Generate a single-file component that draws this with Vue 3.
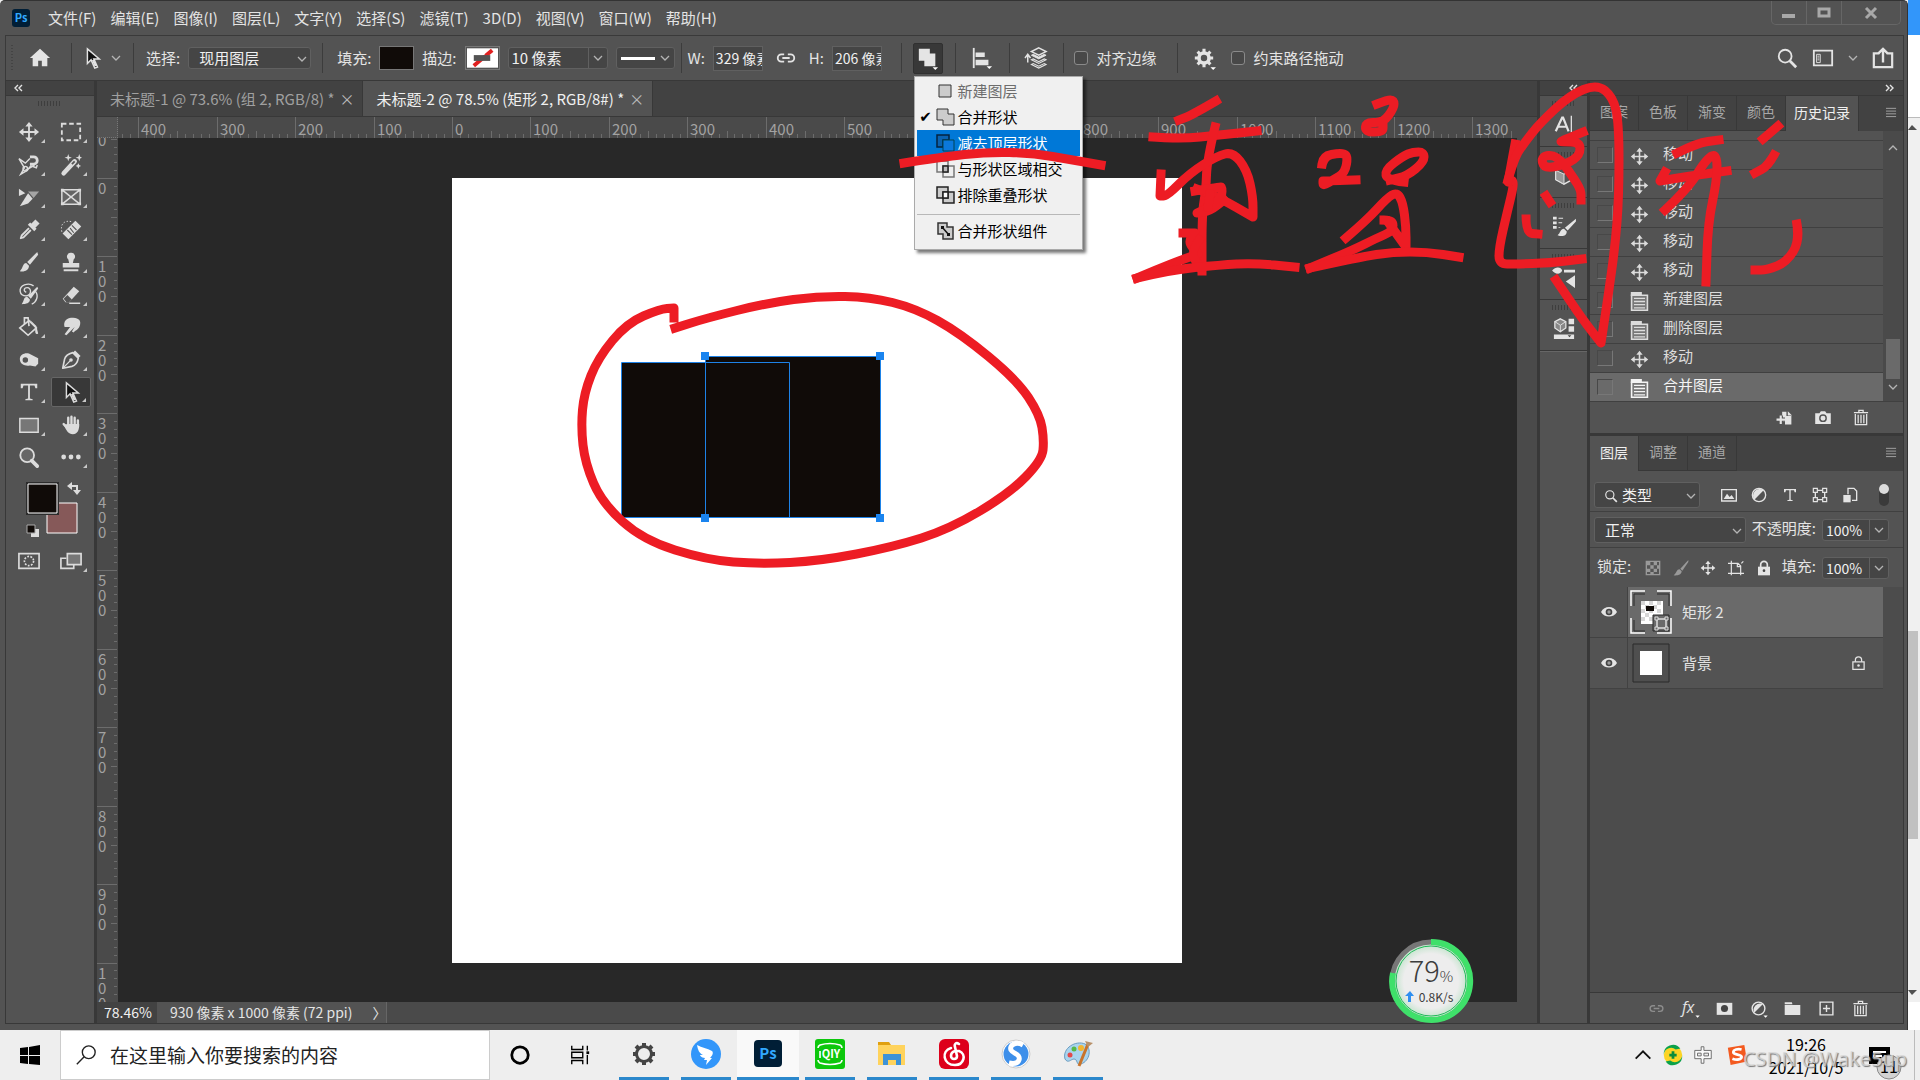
<template>
  <div class="screen">
    <div class="desktop">
      <main class="ps">
        <header class="menubar">
          <span class="ps-logo">Ps</span>
          <nav class="menus">
            <button v-for="m in menus" :key="m" class="menu-button">{{ m }}</button>
          </nav>
          <div class="window-buttons">
            <button aria-label="最小化"><svg viewBox="0 0 14 14"><path d="M0 8h13v4H0z" fill="#a8a8a8" /></svg></button>
            <button aria-label="最大化"><svg viewBox="0 0 14 14"><path d="M2 3h10v7H2z" fill="none" stroke="#a8a8a8" stroke-width="3" /></svg></button>
            <button aria-label="关闭" class="close"><svg viewBox="0 0 14 14"><path d="M2 2l10 10M12 2L2 12" fill="none" stroke="#a8a8a8" stroke-width="3" /></svg></button>
          </div>
        </header>

        <section class="options">
          <div class="group g-home">
            <i class="grip-v"></i>
            <button class="icon-button" aria-label="主页"><svg viewBox="0 0 24 24" v-html="icons.home"></svg></button>
          </div>
          <div class="group g-tool">
            <svg class="icon" viewBox="0 0 24 24" v-html="icons.select"></svg>
            <svg class="chev" viewBox="0 0 10 10" v-html="icons.chevron"></svg>
          </div>
          <div class="group">
            <label for="pick">选择:</label>
            <div class="drop w-pick">
              <select id="pick"><option>现用图层</option></select>
              <svg class="chev" viewBox="0 0 10 10" v-html="icons.chevron"></svg>
            </div>
          </div>
          <div class="group g-paint">
            <span>填充:</span>
            <button class="paint fill" aria-label="填充颜色"></button>
            <span>描边:</span>
            <button class="paint" aria-label="描边颜色">
              <svg viewBox="0 0 32 20"><path d="M0 0h32v20H0z" fill="#fff" /><path d="M7 18L26 2" stroke="#e02020" stroke-width="4" /><path d="M5 4h13v3H5zM16 14h12v3H16z" fill="#fff" /><path d="M7 7h17v6H7z" fill="#535353" /></svg>
            </button>
            <div class="combo w-stroke">
              <input aria-label="描边宽度" value="10 像素" />
              <button aria-label="描边宽度选项"><svg class="chev" viewBox="0 0 10 10" v-html="icons.chevron"></svg></button>
            </div>
            <button class="line-type" aria-label="描边类型"><i></i><svg class="chev" viewBox="0 0 10 10" v-html="icons.chevron"></svg></button>
          </div>
          <div class="group g-size">
            <label for="w">W:</label>
            <input id="w" class="size" value="329 像素" />
            <button class="icon-button link" aria-label="链接"><svg viewBox="0 0 24 24" v-html="icons.link"></svg></button>
            <label for="h">H:</label>
            <input id="h" class="size" value="206 像素" />
          </div>
          <div class="group g-path">
            <button class="path-button" aria-label="路径操作"><svg viewBox="0 0 24 24" v-html="icons.union"></svg></button>
            <ul class="path-menu">
              <li v-for="p in pathOps" :key="p.text" :class="p.state">
                <span class="check">{{ p.state === "checked" ? "✔" : "" }}</span>
                <svg viewBox="0 0 20 20" v-html="p.icon"></svg>
                <button>{{ p.text }}</button>
              </li>
            </ul>
          </div>
          <div class="group g-path"><button class="icon-button" aria-label="对齐"><svg viewBox="0 0 24 24" v-html="icons.align"></svg></button></div>
          <div class="group g-path"><button class="icon-button" aria-label="排列"><svg viewBox="0 0 24 24" v-html="icons.arrange"></svg></button></div>
          <div class="group g-edge">
            <label><input type="checkbox" />对齐边缘</label>
          </div>
          <div class="group g-gear">
            <button class="icon-button" aria-label="设置"><svg viewBox="0 0 24 24" v-html="icons.gear"></svg></button>
            <label><input type="checkbox" />约束路径拖动</label>
          </div>
          <div class="options-right">
            <button class="icon-button" aria-label="搜索"><svg viewBox="0 0 24 24" v-html="icons.search"></svg></button>
            <button class="icon-button" aria-label="工作区"><svg viewBox="0 0 24 24" v-html="icons.workspace"></svg></button>
            <svg class="chev" viewBox="0 0 10 10" v-html="icons.chevron"></svg>
            <button class="icon-button" aria-label="共享"><svg viewBox="0 0 24 24" v-html="icons.share"></svg></button>
          </div>
        </section>

        <div class="work">
          <aside class="toolbar">
            <div class="collapse"><svg viewBox="0 0 10 8" v-html="icons.dblLeft"></svg></div>
            <div class="tool-grip"><i class="grip"></i></div>
            <div class="tools">
              <button v-for="t in tools" :key="t" :class="['tool', { active: t === 'select' }, { plain: t === 'zoom' }]" :aria-label="t">
                <svg viewBox="0 0 24 24" v-html="icons[t]"></svg>
              </button>
            </div>
            <svg class="swatches" viewBox="0 0 60 56">
              <path d="M21 21h30v30H21z" fill="#865959" stroke="#fff" stroke-width="1" />
              <path d="M1 1h31v31H1z" fill="#100b08" stroke="#2c2c2c" stroke-width="2" />
              <path d="M2 2h29v29H2z" fill="#100b08" stroke="#fff" stroke-width="1" />
              <path d="M44 4h7v6" fill="none" stroke="#dcdcdc" stroke-width="2" />
              <path d="M46 0v8l-5-4zM47 8h8l-4 5z" fill="#dcdcdc" />
              <path d="M5 47h8v8H5z" fill="#dcdcdc" /><path d="M1 43h8v8H1z" fill="#100b08" stroke="#aaa" />
            </svg>
            <div class="modes">
              <button class="tool plain" aria-label="快速蒙版"><svg viewBox="0 0 24 24" v-html="icons.quickmask"></svg></button>
              <button class="tool" aria-label="屏幕模式"><svg viewBox="0 0 24 24" v-html="icons.screenmode"></svg></button>
            </div>
          </aside>

          <section class="doc">
            <div class="doc-tabs">
              <div class="doc-tab">未标题-1 @ 73.6% (组 2, RGB/8) *<button aria-label="关闭标签">×</button></div>
              <div class="doc-tab active">未标题-2 @ 78.5% (矩形 2, RGB/8#) *<button aria-label="关闭标签">×</button></div>
            </div>
            <div class="doc-body">
              <div class="corner"></div>
              <svg class="ruler-h">
                <path v-for="t in hTicks" :key="t.at" :d="`M${t.at} ${t.start}V21`" class="tick" />
                <text v-for="l in hLabels" :key="l.at" :x="l.at + 3" y="18">{{ l.text }}</text>
              </svg>
              <div class="filler"></div>
              <svg class="ruler-v">
                <path v-for="t in vTicks" :key="t.at" :d="`M${t.start} ${t.at}H20`" class="tick" />
                <text v-for="d in vDigits" :key="d.y" x="1" :y="d.y">{{ d.text }}</text>
              </svg>
              <div class="stage">
                <div class="paper">
                  <svg viewBox="0 0 730 785">
                    <path d="M170 185h84v-6h174v161H170z" fill="#100b08" />
                    <g fill="none" stroke="#1e82e6">
                      <path d="M169.5 184.500h168v155h-168z" />
                      <path d="M253.500 178.500h175v161h-175z" />
                    </g>
                    <path v-for="h in handles" :key="h" :d="`M${h}h8v8h-8z`" fill="#1a84ef" />
                  </svg>
                </div>
              </div>
              <div class="filler"></div>
            </div>
            <footer class="status">
              <span class="zoom">78.46%</span>
              <span class="info">930 像素 x 1000 像素 (72 ppi)<b>〉</b></span>
            </footer>
          </section>

          <aside class="dock">
            <div class="collapse end"><svg viewBox="0 0 10 8" v-html="icons.dblLeft"></svg></div>
            <div v-for="d in dock" :key="d" class="dock-cell">
              <i class="grip"></i>
              <button :aria-label="d"><svg viewBox="0 0 24 24" v-html="icons[d]"></svg></button>
            </div>
            <div class="dock-rest"></div>
          </aside>

          <aside class="panels">
            <div class="collapse end"><svg viewBox="0 0 10 8" v-html="icons.dblRight"></svg></div>
            <div class="tabs">
              <button v-for="t in historyTabs" :key="t" :class="{ active: t === '历史记录' }">{{ t }}</button>
              <svg class="burger" viewBox="0 0 12 10" v-html="icons.burger"></svg>
            </div>
            <div class="history">
              <ol>
                <li v-for="(h, i) in history" :key="i" :class="{ current: h === '合并图层' }">
                  <i class="snap"></i>
                  <svg viewBox="0 0 24 24" v-html="h === '移动' ? icons.move : icons.doc"></svg>
                  <span>{{ h }}</span>
                </li>
              </ol>
              <div class="scroll">
                <svg class="chev up" viewBox="0 0 10 10" v-html="icons.chevron"></svg>
                <i></i>
                <svg class="chev" viewBox="0 0 10 10" v-html="icons.chevron"></svg>
              </div>
            </div>
            <div class="history-foot">
              <button aria-label="从当前状态创建新文档"><svg viewBox="0 0 24 24" v-html="icons.newdoc"></svg></button>
              <button aria-label="创建新快照"><svg viewBox="0 0 24 24" v-html="icons.camera"></svg></button>
              <button aria-label="删除当前状态"><svg viewBox="0 0 24 24" v-html="icons.trash"></svg></button>
            </div>

            <div class="tabs second">
              <button class="active">图层</button>
              <button>调整</button>
              <button>通道</button>
              <svg class="burger" viewBox="0 0 12 10" v-html="icons.burger"></svg>
            </div>
            <div class="row filter">
              <div class="drop w-kind">
                <svg class="lens" viewBox="0 0 24 24" v-html="icons.search"></svg>
                <select aria-label="图层类型"><option>类型</option></select>
                <svg class="chev" viewBox="0 0 10 10" v-html="icons.chevron"></svg>
              </div>
              <div class="kinds">
                <button v-for="k in kinds" :key="k" :aria-label="k"><svg viewBox="0 0 24 24" v-html="icons[k]"></svg></button>
              </div>
              <button class="switch" aria-label="图层过滤开关"></button>
            </div>
            <div class="row">
              <div class="drop w-blend">
                <select aria-label="混合模式"><option>正常</option></select>
                <svg class="chev" viewBox="0 0 10 10" v-html="icons.chevron"></svg>
              </div>
              <label for="opacity">不透明度:</label>
              <div class="combo w-pct">
                <input id="opacity" value="100%" />
                <button aria-label="不透明度选项"><svg class="chev" viewBox="0 0 10 10" v-html="icons.chevron"></svg></button>
              </div>
            </div>
            <div class="row lock-row">
              <span>锁定:</span>
              <div class="locks">
                <button v-for="k in locks" :key="k" :aria-label="k"><svg viewBox="0 0 24 24" v-html="icons[k]"></svg></button>
              </div>
              <label for="fill">填充:</label>
              <div class="combo w-pct">
                <input id="fill" value="100%" />
                <button aria-label="填充选项"><svg class="chev" viewBox="0 0 10 10" v-html="icons.chevron"></svg></button>
              </div>
            </div>
            <div class="layers">
              <div class="layer selected">
                <button class="eye" aria-label="可见性"><svg viewBox="0 0 24 24" v-html="icons.eye"></svg></button>
                <div class="layer-main">
                  <svg class="thumb" viewBox="0 0 42 44" v-html="icons.shapeThumb"></svg>
                  <span>矩形 2</span>
                </div>
              </div>
              <div class="layer">
                <button class="eye" aria-label="可见性"><svg viewBox="0 0 24 24" v-html="icons.eye"></svg></button>
                <div class="layer-main">
                  <svg class="thumb" viewBox="0 0 42 44"><path d="M3 3h36v38H3z" fill="#4f4f4f" stroke="#2b2b2b" /><path d="M10 10h22v24H10z" fill="#fff" /></svg>
                  <span>背景</span>
                  <svg class="padlock" viewBox="0 0 24 24" v-html="icons.lockOutline"></svg>
                </div>
              </div>
            </div>
            <div class="layers-foot">
              <button v-for="f in footIcons" :key="f" :aria-label="f" :class="{ dim: f === 'link' }"><svg viewBox="0 0 24 24" v-html="icons[f]"></svg></button>
            </div>
          </aside>
        </div>
      </main>

      <div class="behind">
        <div class="blue"></div>
        <div class="white"></div>
        <div class="track">
          <svg viewBox="0 0 12 8"><path d="M0 6h9L4 1z" fill="#505050" /></svg>
          <i></i>
          <svg viewBox="0 0 12 8"><path d="M0 2h9L4 7z" fill="#505050" /></svg>
        </div>
        <div class="white-end"></div>
      </div>
    </div>

    <footer class="taskbar">
      <button class="start" aria-label="开始"><svg viewBox="0 0 20 20"><path d="M0 3l8-1v8H0zM9 2l11-2v10H9zM0 11h8v8l-8-1zM9 11h11v9L9 19z" /></svg></button>
      <div class="search">
        <svg viewBox="0 0 24 24"><circle cx="15" cy="9" r="7" /><path d="M10 14L2 22" /></svg>
        <input aria-label="搜索" placeholder="在这里输入你要搜索的内容" />
      </div>
      <button class="sys" aria-label="Cortana"><svg viewBox="0 0 24 24"><circle cx="12" cy="12" r="9" stroke-width="3" /></svg></button>
      <button class="sys" aria-label="任务视图"><svg viewBox="0 0 24 24"><path d="M3 2v4h12V2M3 22v-4h12v4M3 9h12v6H3zM20 2v5M20 12v10" /><path d="M19 8h3v3h-3z" fill="#000" stroke="none" /></svg></button>
      <button v-for="a in apps" :key="a.name" :class="['app', { active: a.name === 'Photoshop' }]" :aria-label="a.name">
        <svg viewBox="0 0 32 32" v-html="a.icon"></svg>
      </button>
      <div class="tray">
        <button aria-label="显示隐藏的图标"><svg viewBox="0 0 24 24"><path d="M4 16l8-8 8 8" fill="none" stroke="#111" stroke-width="2" /></svg></button>
        <button aria-label="安全卫士"><svg viewBox="0 0 24 24"><circle cx="12" cy="12" r="10" fill="#fcd424" /><path d="M2 12A10 10 0 0 1 20 5l-5 1A8 8 0 0 0 2 12zM22 12A10 10 0 0 1 4 19l5-1A8 8 0 0 0 22 12z" fill="#0ba14a" /><path d="M12 8v8M8 12h8" stroke="#0b8c3c" stroke-width="3" /></svg></button>
        <button aria-label="输入法" class="ime"><svg viewBox="0 0 24 24"><path d="M10 3h3v4h8v9h-8v5h-3v-5H3V7h7zM6 10v3h4v-3zM13 10v3h5v-3z" fill="#fafafa" stroke="#666" /></svg></button>
        <button aria-label="搜狗" class="sogou"><svg viewBox="0 0 24 24"><path d="M2 4l18-3 3 18-18 4z" fill="#f35a1f" /><path d="M17 6c-4-1-9 0-9 3s9 2 9 5-5 4-10 2" fill="none" stroke="#fff" stroke-width="3" /></svg></button>
        <div class="clock"><time>19:26</time><time>2021/10/5</time></div>
        <button aria-label="通知" class="notice"><svg viewBox="0 0 36 36"><path d="M2 5h21v17h-5v4l-4-4H2z" /><path d="M6 10h13M6 14h9" stroke="#fff" stroke-width="2" /><circle cx="22" cy="25" r="12" fill="#d2d2d2" stroke="#888" /><text x="22" y="31" text-anchor="middle">11</text></svg></button>
      </div>
    </footer>

    <div class="speed">
      <svg viewBox="0 0 84 84">
        <defs><radialGradient id="ball"><stop offset="0.7" stop-color="#ededed" /><stop offset="1" stop-color="#b9e2c4" /></radialGradient></defs>
        <circle cx="42" cy="42" r="39" fill="url(#ball)" stroke="#777" stroke-width="5" />
        <path d="M42 3a39 39 0 1 1-38 31" fill="none" stroke="#3fe06a" stroke-width="6" />
        <circle cx="42" cy="42" r="35" fill="none" stroke="#1fb958" stroke-width="1" />
        <path d="M21 52l4 5h-3v6h-3v-6h-3z" fill="#2f8ff0" />
      </svg>
      <p>79<small>%</small></p>
      <p class="rate">0.8K/s</p>
    </div>

    <svg class="ink"><path v-for="(s, i) in strokes" :key="i" :d="smooth(s)" /></svg>
    <div class="mark">CSDN @Wake5up</div>
  </div>
</template>

<script setup>
const menus = ["文件(F)", "编辑(E)", "图像(I)", "图层(L)", "文字(Y)", "选择(S)", "滤镜(T)", "3D(D)", "视图(V)", "窗口(W)", "帮助(H)"];

const icons = {
  home: '<path d="M12 2L1 12h3v9h6v-6h4v6h6v-9h3z" fill="currentColor"/>',
  chevron: '<path d="M1 3l4 4 4-4" fill="none" stroke="currentColor" stroke-width="1.3"/>',
  dblLeft: '<path d="M4 1L1 4l3 3M8 1L5 4l3 3" fill="none" stroke="currentColor" stroke-width="1.4"/>',
  dblRight: '<path d="M1 1l3 3-3 3M5 1l3 3-3 3" fill="none" stroke="currentColor" stroke-width="1.4"/>',
  burger: '<path d="M0 1h11M0 4h11M0 7h11M0 10h11" stroke="currentColor"/>',
  link: '<path d="M10 8H7a4 4 0 0 0 0 8h3M14 8h3a4 4 0 0 1 0 8h-3M8 12h8" fill="none" stroke="currentColor" stroke-width="2"/>',
  union: '<path d="M2 2h12v5h6v14H8v-6H2z" fill="currentColor"/><path d="M17 22h6l-3 3z" fill="#fff"/>',
  align: '<path d="M3 1v22" stroke="currentColor" stroke-width="2"/><path d="M5 6h10v5H5zM5 14h14v6H5z" fill="currentColor"/><path d="M17 21h6l-3 3z" fill="#fff"/>',
  arrange: '<path d="M15 1l8 4-8 4-8-4z" fill="none" stroke="currentColor" stroke-width="1.6"/><path d="M7 9l8 4 8-4-2-1-6 3-6-3z" fill="currentColor" stroke="currentColor"/><path d="M7 14l2-1 6 3 6-3 2 1-8 4zM7 19l2-1 6 3 6-3 2 1-8 4z" fill="none" stroke="currentColor" stroke-width="1.2"/><path d="M3 8v9M0 12l3-4 3 4" fill="none" stroke="currentColor" stroke-width="1.6"/>',
  gear: '<circle cx="12" cy="12" r="5.500" fill="none" stroke="currentColor" stroke-width="4"/><path d="M12 2v4M12 18v4M2 12h4M18 12h4M5 5l3 3M16 16l3 3M19 5l-3 3M5 19l3-3" stroke="currentColor" stroke-width="3.4"/><path d="M19 22h6l-3 3z" fill="#fff"/>',
  search: '<circle cx="10" cy="10" r="7" fill="none" stroke="currentColor" stroke-width="2"/><path d="M15 15l7 7" stroke="currentColor" stroke-width="3"/>',
  workspace: '<path d="M2 4h20v16H2z" fill="none" stroke="currentColor" stroke-width="2"/><path d="M5 8h4v9H5z" fill="none" stroke="currentColor"/><path d="M6 10h2M6 12h2M6 14h2" stroke="currentColor"/>',
  share: '<path d="M8 7H2v15h20V7h-6" fill="none" stroke="currentColor" stroke-width="2.4"/><path d="M12 17V3M7 7l5-5 5 5" fill="none" stroke="currentColor" stroke-width="2.6"/>',
  move: '<path d="M12 4v16M4 12h16" stroke="currentColor" stroke-width="2"/><path d="M12 1l4 5H8zM12 23l4-5H8zM1 12l5-4v8zM23 12l-5-4v8z" fill="currentColor"/>',
  marquee: '<path d="M2 3h20v18H2z" fill="none" stroke="currentColor" stroke-width="2" stroke-dasharray="5 3"/>',
  lasso: '<path d="M1 5l7 5 5-5M1 5l6 10-4 7 7-4 4-5 6 2 1-3M8 18l10-6" fill="none" stroke="currentColor" stroke-width="1.6"/><path d="M13 3h4a4 4 0 0 1 0 8h-4" fill="none" stroke="currentColor" stroke-width="3"/><circle cx="8" cy="16" r="2.5" fill="none" stroke="currentColor" stroke-width="1.6"/>',
  wand: '<path d="M4 21L16 8" stroke="currentColor" stroke-width="5" stroke-linecap="round"/><path d="M13 11l3-3" stroke="#555" stroke-width="2"/><path d="M9 0l1 3 3 1-3 1-1 3-1-3-3-1 3-1zM21 0l1 3 2 1-2 1-1 3-1-3-3-1 3-1zM20 10l1 2 2 1-2 1-1 2-1-2-2-1 2-1z" fill="currentColor"/>',
  slice: '<path d="M1 3l7 5-7 3z" fill="currentColor"/><path d="M11 6h12l-6 7z" fill="#a4a4a4"/><path d="M11 8l5 6-5 5-9 3z" fill="currentColor"/>',
  frame: '<path d="M2 4h20v16H2zM2 4l20 16M22 4L2 20" fill="#777" fill-opacity=".5" stroke="currentColor" stroke-width="1.6"/><path d="M1 3h3v3H1zM20 3h3v3h-3zM1 18h3v3H1zM20 18h3v3h-3z" fill="currentColor"/>',
  dropper: '<path d="M12 10L4 18l-1 3 3-1 8-8" fill="none" stroke="currentColor" stroke-width="2" stroke-linejoin="round"/><path d="M12 5l7 7M14 8l5-5 2 2-5 5" stroke="currentColor" stroke-width="3.6"/>',
  heal: '<path d="M6 19L20 5" stroke="currentColor" stroke-width="9"/><path d="M8 12l5 5M11 10l4 5M13 7l5 5" stroke="#555" stroke-width="1.2"/><path d="M2 14C0 5 5 1 13 3" fill="none" stroke="currentColor" stroke-dasharray="1.500 2"/>',
  brush: '<path d="M21 1L10 12l3 3L22 4z" fill="currentColor"/><path d="M9 13c-4 0-3 5-7 9 5 1 10-1 10-6z" fill="currentColor"/>',
  stamp: '<path d="M12 2a4 4 0 0 1 3 7l-1 4h7v5H3v-5h7L9 9a4 4 0 0 1 3-7zM4 20h16v2H4z" fill="currentColor"/>',
  history: '<path d="M21 3L11 13l3 3 8-11z" fill="currentColor"/><path d="M10 14c-4 0-3 4-6 8 5 0 9-1 9-5z" fill="currentColor"/><path d="M9 9c-3-1-3-5 1-5 5 0 5 8-1 9-8 0-9-9-2-12 6-2 10 1 10 1M19 8c4 5 1 12-4 14" fill="none" stroke="currentColor" stroke-width="1.5"/>',
  eraser: '<path d="M3 16L15 3l6 5L10 20H6z" fill="currentColor"/><path d="M4 16l4-4 5 5-3 3H7z" fill="#555"/><path d="M10 21h12" stroke="currentColor" stroke-width="1.6"/>',
  bucket: '<path d="M2 13L12 5l8 8-9 8z" fill="none" stroke="currentColor" stroke-width="1.8"/><path d="M7 9V2h4l1 9" fill="none" stroke="currentColor" stroke-width="1.8"/><path d="M13 4l7 7 2 8c-2 2-4 0-3-6z" fill="currentColor"/>',
  smudge: '<path d="M5 12C3 6 8 2 12 2c7 0 11 2 10 7-1 6-5 6-7 9l-2-1 3-5-9 9-2-1 6-8z" fill="currentColor"/>',
  dodge: '<path d="M2 11C2 5 10 3 14 6l8 4v6l-3 3-6-1C8 19 2 17 2 11z" fill="currentColor"/><circle cx="8" cy="12" r="3" fill="#535353"/>',
  pen: '<path d="M14 4c-4 1-8 3-9 7L3 21l10-2c4-1 6-4 7-9z" fill="none" stroke="currentColor" stroke-width="1.8" stroke-linejoin="round"/><path d="M4 20l7-7" stroke="currentColor" stroke-width="1.400"/><circle cx="12" cy="12" r="2" fill="currentColor"/><path d="M15 3l6 6" stroke="currentColor" stroke-width="4"/>',
  type: '<path d="M3 3h18v5h-2l-1-3h-5v14l3 1v1H8v-1l3-1V5H6L5 8H3z" fill="currentColor"/>',
  select: '<path d="M7 2v16l4-4 4 9 3-1-4-9h6z" fill="#111" stroke="currentColor" stroke-width="1.6"/><path d="M13 14l3 7" stroke="currentColor" stroke-width="2.4"/>',
  rect: '<path d="M2 5h20v15H2z" fill="#777" stroke="currentColor" stroke-width="1.6"/>',
  hand: '<path d="M9 13V4M12.500 12V3M16 13V4M19.500 14V7M7 14l-3-3" stroke="currentColor" stroke-width="2.6" stroke-linecap="round"/><path d="M8 11h13c0 7-2 11-7 11S7 18 4 12z" fill="currentColor"/>',
  zoom: '<circle cx="10" cy="10" r="7.500" fill="#666" stroke="currentColor" stroke-width="2"/><path d="M15 16l6 6" stroke="currentColor" stroke-width="4" stroke-linecap="round"/>',
  more: '<circle cx="4" cy="12" r="2.600" fill="currentColor"/><circle cx="12" cy="12" r="2.600" fill="currentColor"/><circle cx="20" cy="12" r="2.600" fill="currentColor"/>',
  quickmask: '<path d="M1 4h22v16H1z" fill="none" stroke="currentColor" stroke-width="1.8"/><circle cx="12" cy="12" r="5" fill="none" stroke="currentColor" stroke-width="1.800" stroke-dasharray="2 1.500"/>',
  screenmode: '<path d="M7 9H1v11h14v-4" fill="none" stroke="currentColor" stroke-width="1.8"/><path d="M8 4h15v12H8z" fill="#777" stroke="currentColor" stroke-width="1.8"/>',
  character: '<path d="M3 20L10 5h1l6 15M6 15h9" fill="none" stroke="currentColor" stroke-width="2.400"/><path d="M20 3v18" stroke="currentColor" stroke-width="1.400"/>',
  cube: '<path d="M12 3l9 4v10l-9 5-9-5V7z" fill="none" stroke="currentColor" stroke-width="1.600"/><path d="M3 7l9 4v11l-9-5z" fill="#999" stroke="currentColor"/><path d="M12 11l9-4" stroke="currentColor"/>',
  brushSet: '<path d="M0 2h4v3H0zM0 7h4v3H0zM0 12h4v3H0zM6 3h5v1H6zM6 8h4v1H6zM6 13h2v1H6z" fill="currentColor"/><path d="M25 4L13 14l3 3 9-10zM12 15c-4 0-4 5-7 7 5 2 10 1 10-4z" fill="currentColor"/>',
  brushes: '<path d="M-1 5c4-5 10-4 11 0-2 5-8 4-11 0zM12 4h12v3H12zM24 10v14l-10-7z" fill="currentColor"/>',
  library: '<path d="M8 2l6 3v7l-6 4-6-4V5z" fill="#888" stroke="currentColor" stroke-width="1.400"/><path d="M2 5l6 4 6-4M8 9v7" stroke="currentColor" fill="none"/><path d="M17 2h6v6h-6zM17 10h6v6h-6zM1 19h22v5H1z" fill="currentColor"/><path d="M16 20h4l-2 2z" fill="#444"/>',
  doc: '<path d="M1 0h14v5H1z" fill="currentColor"/><path d="M2 4h20v19H2z" fill="#777" stroke="currentColor" stroke-width="2"/><path d="M5 8h14M5 12h14M5 16h14M5 20h14" stroke="currentColor" stroke-width="1.600"/>',
  newdoc: '<path d="M8 4h6v6h7v12h-9v-4H8z" fill="currentColor"/><path d="M16 3l6 6h-6z" fill="currentColor"/><path d="M0 15h12M6 9v12" stroke="#535353" stroke-width="6"/><path d="M0 15h12M6 9v12" stroke="currentColor" stroke-width="3"/>',
  camera: '<path d="M1 6h6l2-3h6l2 3h6v15H1z" fill="currentColor"/><circle cx="12" cy="13" r="4.500" fill="none" stroke="#535353" stroke-width="2"/>',
  trash: '<path d="M2 5h20M9 5V2h6v3M4 7v15h16V7M8 8v12M12 8v12M16 8v12" fill="none" stroke="currentColor" stroke-width="1.800"/>',
  image: '<path d="M1 4h22v17H1z" fill="none" stroke="currentColor" stroke-width="2"/><path d="M4 18l5-8 4 5 3-3 4 6z" fill="currentColor"/>',
  adjust: '<circle cx="12" cy="12" r="10" fill="none" stroke="currentColor" stroke-width="2"/><path d="M5 19L19 5A10 10 0 0 0 5 19z" fill="currentColor"/>',
  shape: '<path d="M5 5h14v14H5z" fill="none" stroke="currentColor" stroke-width="2"/><path d="M2 2h6v6H2zM16 2h6v6h-6zM2 16h6v6H2zM16 16h6v6h-6z" fill="#535353" stroke="currentColor" stroke-width="1.800"/>',
  smart: '<path d="M9 11V2h9l4 4v14h-7" fill="none" stroke="currentColor" stroke-width="2"/><path d="M2 12h11v11H2z" fill="currentColor"/>',
  pixels: '<path d="M2 2h20v20H2z" fill="#555" stroke="#999" stroke-width="2"/><path d="M3 3h5v5H3zM13 3h5v5h-5zM8 8h5v5H8zM18 8h4v5h-4zM3 13h5v5H3zM13 13h5v5h-5zM8 18h5v4H8z" fill="#999"/>',
  paintLock: '<path d="M23 0L11 13l3 3L23 3z" fill="#999"/><path d="M10 14c-5 0-4 5-9 9 6 1 12-1 12-6z" fill="#999"/>',
  artboard: '<path d="M5 1v22M0 5h15l4 4v14M0 20h24M14 5v5h5M20 5l3-3" fill="none" stroke="currentColor" stroke-width="1.800"/>',
  lock: '<path d="M3 10h18v13H3z" fill="currentColor"/><path d="M7 11V7a5 5 0 0 1 10 0v4" fill="none" stroke="currentColor" stroke-width="2.500"/><circle cx="12" cy="16" r="2" fill="#444"/>',
  lockOutline: '<path d="M3 10h18v12H3z" fill="none" stroke="currentColor" stroke-width="2"/><path d="M7 10V7a5 5 0 0 1 10 0v3" fill="none" stroke="currentColor" stroke-width="2"/><circle cx="12" cy="16" r="2" fill="currentColor"/>',
  eye: '<path d="M0 12c5-10 19-10 24 0-5 9-19 9-24 0z" fill="currentColor"/><circle cx="12" cy="12" r="5" fill="#444"/><circle cx="12" cy="12" r="2.500" fill="#999"/>',
  fx: '<text x="0" y="18" font-size="22" font-style="italic" font-family="Open Sans, sans-serif" fill="currentColor">fx</text><path d="M19 22h6l-3 3z" fill="#fff"/>',
  mask: '<path d="M1 4h22v17H1z" fill="currentColor"/><circle cx="12" cy="12" r="5" fill="#444"/>',
  adjustMenu: '<circle cx="12" cy="12" r="9" fill="none" stroke="currentColor" stroke-width="2"/><path d="M6 18L18 6A9 9 0 0 0 6 18z" fill="currentColor"/><path d="M19 22h6l-3 3z" fill="#fff"/>',
  folder: '<path d="M1 3h10l1 3H1zM1 7h22v14H1z" fill="currentColor"/>',
  add: '<path d="M3 3h18v18H3zM12 7v10M7 12h10" fill="none" stroke="currentColor" stroke-width="2"/>',
  shapeThumb:
    '<path d="M1 16V1h14M27 1h14v15M41 28v15H27M15 43H1V28" fill="none" stroke="#fff" stroke-width="1.500"/><path d="M4 16V4h11M27 4h12v12M15 41H4V30" fill="none" stroke="#2b2b2b"/><path d="M11 11h22v23H11z" fill="#fff"/><path d="M11 11h4v4h-4zM19 11h4v4h-4zM27 11h4v4h-4zM15 15h4v4h-4zM23 15h4v4h-4zM11 19h4v4h-4zM19 19h4v4h-4zM27 19h4v4h-4zM15 23h4v4h-4zM11 27h4v4h-4zM19 27h4v4h-4z" fill="#d6d6d6"/><path d="M16 16h8v5h-8z" fill="#100b08"/><path d="M23 25h16v16H23z" fill="#6a6a6a" stroke="#2b2b2b"/><path d="M27 29h9v9h-9z" fill="none" stroke="#ddd" stroke-width="1.500"/><path d="M25 27h3v3h-3zM35 27h3v3h-3zM25 37h3v3h-3zM35 37h3v3h-3z" fill="#6a6a6a" stroke="#ddd"/>',
};

const pathOps = [
  { text: "新建图层", state: "disabled", icon: '<path d="M4 4h12v12H4z" fill="#ccc" stroke="#333"/>' },
  { text: "合并形状", state: "checked", icon: '<path d="M2 2h11v5h6v11H8v-5H2z" fill="#ccc" stroke="#333"/>' },
  { text: "减去顶层形状", state: "hover", icon: '<path d="M2 2h12v5H8v7H2z" fill="#0a62b0" stroke="#04233f" stroke-width="1.500"/><path d="M8 7h11v11H8z" fill="#0b78dc" stroke="#045"/>' },
  { text: "与形状区域相交", state: "", icon: '<path d="M2 2h11v11H2zM8 7h11v11H8z" fill="#eee" stroke="#777" stroke-width="1.500"/><path d="M8 7h5v6H8z" fill="#bbb" stroke="#222" stroke-width="1.500"/>' },
  { text: "排除重叠形状", state: "", icon: '<path d="M2 2h11v11H2zM8 7h11v11H8z" fill="#ccc" stroke="#222" stroke-width="1.500"/><path d="M8 7h5v6H8z" fill="#fff" stroke="#222" stroke-width="1.500"/>' },
  { text: "合并形状组件", state: "last", icon: '<path d="M3 2h9v4h6v12H8v-5H3z" fill="#ccc" stroke="#333" stroke-width="1.500"/><path d="M7 6l7 8" stroke="#111" stroke-width="1.500"/><path d="M6 5h3v3H6zM12 12h3v3h-3z" fill="#111"/>' },
];

const tools = [
  "move", "marquee", "lasso", "wand", "slice", "frame", "dropper", "heal", "brush", "stamp", "history",
  "eraser", "bucket", "smudge", "dodge", "pen", "type", "select", "rect", "hand", "zoom", "more",
];
const dock = ["character", "cube", "brushSet", "brushes", "library"];
const historyTabs = ["图案", "色板", "渐变", "颜色", "历史记录"];
const history = ["移动", "移动", "移动", "移动", "移动", "新建图层", "删除图层", "移动", "合并图层"];
const kinds = ["image", "adjust", "type", "shape", "smart"];
const locks = ["pixels", "paintLock", "move", "artboard", "lock"];
const footIcons = ["link", "fx", "mask", "adjustMenu", "folder", "add", "trash"];

// rulers: one unit of the document is 0.7846 screen pixels
const scale = 0.7846;
const ticks = (origin, from, to, tall, mid, small) => {
  const list = [];
  for (let n = from; n <= to; n += 10) {
    const start = n % 100 === 0 ? tall : n % 50 === 0 ? mid : small;
    list.push({ at: Math.round(origin + n * scale) + 0.5, start });
  }
  return list;
};
const hTicks = ticks(334, -420, 1350, 0, 14, 17);
const vTicks = ticks(40, -50, 1050, 0, 14, 17);
const hLabels = [];
for (let n = -400; n <= 1300; n += 100) {
  hLabels.push({ at: Math.round(334 + n * scale), text: Math.abs(n) });
}
const vDigits = [];
for (let n = -100; n <= 1000; n += 100) {
  const top = Math.round(40 + n * scale);
  String(Math.abs(n)).split("").forEach((text, i) => vDigits.push({ text, y: top + 16 + i * 15 }));
}

const handles = ["249 174", "424 174", "249 336", "424 336"];

const apps = [
  { name: "设置", icon: '<circle cx="16" cy="16" r="7.500" fill="none" stroke="#444" stroke-width="3"/><path d="M16 5v4M16 23v4M5 16h4M23 16h4M8 8l3 3M21 21l3 3M24 8l-3 3M8 24l3-3" stroke="#444" stroke-width="4"/>' },
  { name: "钉钉", icon: '<circle cx="16" cy="16" r="15" fill="#3296fa"/><path d="M7 7c5 3 10 3 15 6 2 2 0 5-2 7l2 0-6 7 1-5h-3l1-2c-4 0-5-3-5-3h3c-4-2-5-5-6-10z" fill="#fff"/>' },
  { name: "Photoshop", icon: '<rect x="2" y="2" width="28" height="27" rx="4" fill="#001e36"/><text x="16" y="21" text-anchor="middle" font-size="15" font-weight="700" font-family="Noto Sans CJK SC, sans-serif" fill="#31a8ff">Ps</text>' },
  { name: "爱奇艺", icon: '<rect x="1" y="1" width="30" height="30" rx="3" fill="#0cc70c"/><path d="M4 10q0-2 2-3 10-3 20 0 2 1 2 3M4 22q0 2 2 3 10 3 20 0 2-1 2-3M6 13v7" fill="none" stroke="#fff" stroke-width="1.600"/><text x="17" y="20" text-anchor="middle" font-size="11" font-weight="700" font-family="Noto Sans CJK SC, sans-serif" fill="#fff">QIY</text>' },
  { name: "文件资源管理器", icon: '<path d="M2 4h11l2 3H2z" fill="#e0a010"/><path d="M2 7h27v20H2z" fill="#ffd35c"/><path d="M7 27V16h18v11h-5v-5h-8v5z" fill="#3d93d8"/>' },
  { name: "网易云音乐", icon: '<rect x="1" y="1" width="30" height="30" rx="6" fill="#dd001b"/><path d="M21 6c-3-2-5 0-4 3l2 9c0 4-6 4-6 0s4-6 8-5c8 3 5 14-4 14-12 0-14-14-4-17" fill="none" stroke="#fff" stroke-width="2.600" stroke-linecap="round"/>' },
  { name: "搜狗浏览器", icon: '<circle cx="16" cy="16" r="14" fill="#fff" stroke="#ccc"/><circle cx="16" cy="16" r="12.500" fill="#3d8fea"/><path d="M23 7c-7-4-14 0-12 5 2 4 10 4 8 10-1 3-5 4-10 3" fill="none" stroke="#fff" stroke-width="5"/>' },
  { name: "画图", icon: '<path d="M3 21C0 10 14 2 23 6c7 4 5 17-4 20-5 2-3-5-7-5-3 0-6 5-9 0z" fill="#a9d4ee" stroke="#6a9cc0"/><circle cx="8" cy="17" r="2.500" fill="#e24a4a"/><circle cx="12" cy="11" r="2.500" fill="#58b947"/><circle cx="19" cy="10" r="3" fill="#f2b632"/><path d="M26 6l-9 22" stroke="#c8742c" stroke-width="3"/><path d="M23 3l8 2-5 4z" fill="#b8916a"/>' },
];

// a point given twice makes a sharp turn
const strokes = [
  [[674, 318], [674, 308], [674, 308], [660, 309], [627, 323], [598, 358], [584, 393], [581, 427], [585, 463], [602, 503], [643, 540], [707, 560], [760, 564], [820, 561], [893, 547], [950, 529], [1010, 493], [1042, 460], [1044, 440], [1040, 415], [1017, 380], [960, 333], [915, 308], [870, 297], [820, 296], [767, 303], [707, 318], [675, 328]],
  [[904, 163], [942, 157], [987, 152], [1032, 153], [1073, 160], [1101, 165]],
  [[1216, 101], [1192, 115], [1179, 120]],
  [[1153, 137], [1180, 139], [1220, 135], [1257, 131]],
  [[1215, 127], [1207, 160], [1206, 190], [1202, 213], [1202, 271]],
  [[1161, 174], [1160, 196], [1160, 196], [1167, 196], [1190, 173], [1217, 156], [1233, 152], [1247, 170], [1253, 197], [1253, 217], [1253, 217], [1220, 198], [1197, 189]],
  [[1195, 191], [1220, 187], [1222, 187], [1222, 196], [1212, 206], [1197, 213], [1197, 213], [1210, 211], [1224, 200]],
  [[1210, 194], [1208, 207]],
  [[1183, 233], [1195, 233], [1195, 233], [1188, 242], [1198, 254], [1198, 254], [1173, 263], [1137, 278]],
  [[1199, 240], [1190, 252], [1199, 266]],
  [[1137, 278], [1170, 270], [1220, 265], [1253, 263], [1295, 267]],
  [[1377, 104], [1387, 100], [1394, 100], [1394, 108], [1383, 123], [1366, 122], [1365, 132], [1383, 132], [1383, 124]],
  [[1322, 164], [1323, 156], [1340, 153], [1348, 155], [1345, 173], [1333, 180], [1323, 186], [1323, 181], [1323, 181], [1356, 180]],
  [[1404, 182], [1387, 180], [1385, 170], [1403, 156], [1413, 152], [1424, 152], [1424, 162], [1407, 176], [1390, 180]],
  [[1346, 238], [1367, 220], [1387, 198], [1397, 192], [1403, 203], [1406, 227], [1406, 247], [1406, 247], [1388, 222]],
  [[1384, 220], [1393, 220], [1393, 231], [1377, 238], [1353, 250], [1310, 268]],
  [[1310, 268], [1360, 257], [1393, 252], [1427, 252], [1459, 257]],
  [[1515, 144], [1508, 182], [1508, 182], [1515, 180], [1507, 213], [1499, 248], [1499, 264], [1515, 264], [1550, 263], [1582, 259]],
  [[1508, 180], [1514, 158], [1525, 142], [1540, 123], [1570, 95], [1597, 84], [1613, 97], [1619, 123], [1619, 197], [1615, 247], [1608, 297], [1601, 343], [1601, 343], [1583, 320], [1556, 280]],
  [[1583, 132], [1561, 141], [1561, 142], [1580, 142], [1580, 155], [1567, 164], [1544, 169], [1541, 156], [1557, 155], [1573, 177], [1581, 190], [1581, 200]],
  [[1546, 196], [1550, 202]],
  [[1526, 219], [1526, 233], [1538, 234]],
  [[1677, 153], [1697, 143], [1719, 140]],
  [[1665, 172], [1660, 181], [1660, 181], [1690, 176], [1727, 171]],
  [[1665, 210], [1687, 190], [1707, 158], [1717, 154], [1717, 180], [1708, 223], [1706, 282]],
  [[1778, 126], [1763, 139]],
  [[1774, 155], [1768, 166], [1755, 173]],
  [[1797, 224], [1800, 240], [1787, 262], [1767, 270], [1755, 270]],
];

const smooth = (pts) => {
  let d = `M${pts[0]}`;
  for (let i = 1; i < pts.length - 1; i++) {
    const mx = (pts[i][0] + pts[i + 1][0]) / 2;
    const my = (pts[i][1] + pts[i + 1][1]) / 2;
    d += `Q${pts[i]} ${mx},${my}`;
  }
  return `${d}L${pts[pts.length - 1]}`;
};
</script>

<style>
body {
  margin: 0;
  background: #eee;
}
</style>

<style scoped>
* {
  box-sizing: border-box;
}
.screen {
  position: relative;
  display: flex;
  flex-direction: column;
  min-height: 100vh;
  overflow: hidden;
  font-family: "Noto Sans CJK SC", sans-serif;
  font-size: 15px;
  line-height: 20px;
  color: #e4e4e4;
}
button,
input,
select {
  font: inherit;
  color: inherit;
  border: 0;
  padding: 0;
  background: none;
}
svg {
  display: block;
  flex: none;
  overflow: visible;
}
.desktop {
  flex: 1;
  display: flex;
}
.ps {
  flex: 1;
  min-width: 0;
  display: flex;
  flex-direction: column;
  background: #535353;
  border-top: 1px solid #333;
  border-right: 1px solid #333;
  border-radius: 5px 5px 0 0;
}
.menubar {
  height: 34px;
  display: flex;
  align-items: center;
  padding-left: 12px;
}
.ps-logo {
  width: 18px;
  height: 18px;
  margin-right: 18px;
  border-radius: 3px;
  background: #001e36;
  color: #31a8ff;
  font-size: 11px;
  font-weight: 700;
  line-height: 17px;
  text-align: center;
}
.menus {
  display: flex;
  gap: 14px;
}
.menu-button {
  white-space: nowrap;
}
.window-buttons {
  display: flex;
  align-self: flex-start;
  margin: 0 6px 0 auto;
  height: 24px;
  border: 1px solid #666;
  border-top: 0;
  border-radius: 0 0 5px 5px;
}
.window-buttons button {
  width: 35px;
  border-right: 1px solid #666;
  display: flex;
  align-items: center;
  justify-content: center;
}
.window-buttons .close {
  width: 58px;
  border: 0;
}
.window-buttons svg {
  width: 14px;
  height: 14px;
}
.options {
  height: 45px;
  margin: 0 3px 0 5px;
  border: 1px solid #3a3a3a;
  border-bottom: 0;
  display: flex;
  align-items: center;
}
.group {
  height: 30px;
  display: flex;
  align-items: center;
  gap: 8px;
  padding: 0 11px 0 12px;
  border-left: 1px solid #3c3c3c;
  white-space: nowrap;
  position: relative;
}
.icon-button {
  display: flex;
}
.icon-button svg,
.icon {
  width: 22px;
  height: 22px;
}
.chev {
  width: 10px;
  height: 10px;
  color: #b4b4b4;
}
.g-home {
  width: 65px;
  padding: 0 0 0 5px;
  gap: 16px;
  border: 0;
}
.grip-v {
  width: 2px;
  height: 26px;
  background: repeating-linear-gradient(#444 0 1px, #535353 1px 3px);
}
.g-tool {
  width: 62px;
  padding: 0 0 0 9px;
}
.drop {
  position: relative;
  height: 22px;
}
.drop select {
  width: 100%;
  height: 100%;
  padding-left: 10px;
  appearance: none;
  background: #454545;
  border: 1px solid #606060;
  border-radius: 3px;
  color: #f0f0f0;
}
.drop .chev {
  position: absolute;
  right: 4px;
  top: 50%;
  margin-top: -4px;
}
.w-pick {
  width: 123px;
}
.g-paint {
  padding: 0 6px 0 14px;
}
.paint {
  width: 35px;
  height: 24px;
  padding: 1px;
  border: 1px solid #777;
}
.paint svg {
  width: 100%;
  height: 100%;
}
.paint.fill {
  background: #100b08;
}
.combo {
  display: flex;
  height: 22px;
  background: #454545;
  border: 1px solid #606060;
  border-radius: 3px;
  color: #f0f0f0;
}
.combo input {
  flex: 1;
  width: 0;
  padding-left: 3px;
}
.combo button {
  width: 19px;
  border-left: 1px solid #606060;
  display: flex;
  align-items: center;
  justify-content: center;
}
.w-stroke {
  width: 100px;
}
.line-type {
  width: 59px;
  height: 22px;
  display: flex;
  align-items: center;
  justify-content: space-between;
  padding: 0 4px;
  background: #454545;
  border: 1px solid #606060;
  border-radius: 3px;
}
.line-type i {
  width: 34px;
  height: 3px;
  background: #fff;
}
.g-size {
  width: 220px;
  padding: 0 0 0 6px;
}
.size {
  width: 50px;
  height: 25px;
  padding-left: 2px;
  background: #454545;
  border: 1px solid #606060;
  font-size: 14px;
  color: #f0f0f0;
}
.link {
  width: 30px;
  justify-content: center;
}
.g-path {
  width: 54px;
  padding: 0;
  justify-content: center;
}
.path-button {
  width: 30px;
  height: 31px;
  display: flex;
  align-items: center;
  justify-content: center;
  background: #383838;
  border: 1px solid #303030;
  border-radius: 2px;
}
.path-button svg {
  width: 22px;
  height: 22px;
}
.path-menu {
  position: absolute;
  z-index: 5;
  left: 12px;
  top: 33px;
  width: 169px;
  margin: 0;
  padding: 1px 2px 3px;
  list-style: none;
  background: #f0f0f0;
  border: 1px solid #aaa;
  box-shadow: 3px 3px 3px #0008;
  color: #000;
}
.path-menu li {
  display: flex;
  align-items: center;
  height: 26px;
}
.path-menu .check {
  width: 18px;
  text-align: center;
  font-family: "DejaVu Sans", sans-serif;
  font-size: 15px;
}
.path-menu svg {
  width: 20px;
  height: 20px;
  margin-right: 3px;
}
.path-menu .disabled {
  color: #6d6d6d;
}
.path-menu .hover {
  background: #0078d7;
  color: #fff;
}
.path-menu .last {
  height: 32px;
  margin-top: 6px;
  border-top: 1px solid #b8b8b8;
}
.g-edge {
  width: 114px;
  padding: 0 0 0 10px;
}
.g-edge label,
.g-gear label {
  display: flex;
  align-items: center;
  gap: 9px;
}
.group input[type="checkbox"] {
  appearance: none;
  width: 14px;
  height: 14px;
  margin: 0;
  border: 1px solid #8a8a8a;
  border-radius: 3px;
  background: #484848;
}
.g-gear {
  padding: 0 0 0 15px;
  gap: 16px;
}
.options-right {
  display: flex;
  align-items: center;
  gap: 14px;
  margin: 0 9px 0 auto;
}
.work {
  flex: 1;
  display: flex;
  gap: 3px;
  margin: 0 3px 6px 5px;
  padding: 1px;
  background: #383838;
}
.collapse {
  height: 15px;
  display: flex;
  align-items: center;
  padding: 0 8px;
  background: #424242;
  border-bottom: 1px solid #383838;
}
.collapse.end {
  justify-content: flex-end;
}
.collapse svg {
  width: 10px;
  height: 8px;
}
.toolbar {
  width: 88px;
  background: #535353;
}
.tool-grip {
  height: 20px;
  display: flex;
  justify-content: center;
  padding-top: 5px;
}
.grip {
  width: 24px;
  height: 5px;
  background: repeating-linear-gradient(90deg, #3e3e3e 0 1px, #535353 1px 3px);
}
.tools {
  height: 358px;
  display: grid;
  grid-template-columns: 1fr 1fr;
  grid-auto-rows: 1fr;
  padding: 0 2px;
}
.modes {
  display: grid;
  grid-template-columns: 1fr 1fr;
  padding: 0 2px;
}
.tool {
  position: relative;
  height: 30px;
  margin: 1px;
  display: flex;
  align-items: center;
  justify-content: center;
  color: #dcdcdc;
  border-radius: 2px;
}
.tool svg {
  width: 22px;
  height: 22px;
}
.tool::after {
  content: "";
  position: absolute;
  right: 4px;
  bottom: 4px;
  border-left: 4px solid transparent;
  border-bottom: 4px solid #c8c8c8;
}
.tool.plain::after {
  display: none;
}
.tool.active {
  background: #383838;
  border: 1px solid #666;
}
.swatches {
  width: 60px;
  height: 56px;
  margin: 8px 0 7px 20px;
}
.doc {
  flex: 1;
  min-width: 0;
  display: flex;
  flex-direction: column;
  background: #4a4a4a;
}
.doc-tabs {
  height: 36px;
  display: flex;
  background: #424242;
  border-bottom: 1px solid #383838;
}
.doc-tab {
  display: flex;
  align-items: center;
  justify-content: space-between;
  gap: 5px;
  padding: 0 9px 0 13px;
  border-right: 1px solid #383838;
  white-space: nowrap;
  color: #a0a0a0;
}
.doc-tab.active {
  background: #535353;
  color: #f0f0f0;
}
.doc-tab button {
  width: 14px;
  color: #bbb;
  font-size: 15px;
}
.doc-body {
  flex: 1;
  display: grid;
  grid-template-columns: 21px 1fr 20px;
  grid-template-rows: 21px 1fr;
}
.corner {
  background: #535353;
  border-right: 1px dotted #777;
  border-bottom: 1px dotted #777;
}
.ruler-h,
.ruler-v {
  width: 100%;
  height: 100%;
  overflow: hidden;
  contain: size;
  background: #4a4a4a;
  fill: #a2a2a2;
}
.tick {
  stroke: #6c6c6c;
}
.filler {
  background: #4a4a4a;
}
.stage {
  position: relative;
  overflow: hidden;
  background: #282828;
}
.paper {
  position: absolute;
  left: 334px;
  top: 40px;
  width: 730px;
  height: 785px;
  background: #fff;
}
.status {
  height: 21px;
  display: flex;
  font-size: 14px;
}
.zoom {
  width: 60px;
  padding-left: 7px;
  background: #424242;
  color: #f0f0f0;
}
.info {
  padding-left: 13px;
  background: #535353;
  border-right: 1px solid #666;
}
.info b {
  padding-left: 20px;
  font-weight: 400;
}
.dock {
  width: 47px;
  display: flex;
  flex-direction: column;
  background: #535353;
}
.dock-cell {
  height: 51px;
  display: flex;
  flex-direction: column;
  align-items: center;
  justify-content: space-between;
  padding: 5px 0 11px;
  border-bottom: 1px solid #383838;
}
.dock-cell svg {
  width: 24px;
  height: 22px;
}
.dock-rest {
  flex: 1;
  border-top: 1px solid #666;
}
.panels {
  width: 313px;
  display: flex;
  flex-direction: column;
  background: #535353;
}
.tabs {
  display: flex;
  height: 35px;
  background: #424242;
  font-size: 14px;
  color: #a8a8a8;
}
.tabs button {
  width: 49px;
  padding-bottom: 4px;
  border-right: 1px solid #383838;
  border-bottom: 1px solid #383838;
}
.tabs button:nth-of-type(5) {
  width: 73px;
}
.tabs .active {
  background: #535353;
  border-bottom: 0;
  color: #f0f0f0;
}
.burger {
  width: 11px;
  height: 10px;
  margin: 11px 6px 0 auto;
}
.history {
  display: flex;
  border-bottom: 1px solid #404040;
}
.history ol {
  flex: 1;
  margin: 0;
  padding: 9px 0 0;
  list-style: none;
}
.history li {
  height: 29px;
  display: flex;
  align-items: center;
  padding-left: 7px;
  border-top: 1px solid #404040;
  color: #dcdcdc;
}
.history li.current {
  background: #6a6a6a;
  color: #f4f4f4;
}
.history li svg {
  width: 19px;
  height: 19px;
  margin: 3px 14px 0 17px;
}
.history li span {
  padding-bottom: 4px;
}
.snap {
  width: 16px;
  height: 16px;
  border: 1px solid;
  border-color: #484848 #777 #777 #484848;
}
.scroll {
  width: 20px;
  display: flex;
  flex-direction: column;
  align-items: center;
  padding: 12px 0 9px;
  background: #4a4a4a;
}
.scroll i {
  width: 14px;
  height: 40px;
  margin: auto 0 3px;
  background: #6a6a6a;
}
.up {
  transform: rotate(180deg);
}
.history-foot {
  display: flex;
  justify-content: flex-end;
  align-items: center;
  gap: 20px;
  height: 31px;
  padding-right: 33px;
}
.history-foot svg {
  width: 18px;
  height: 17px;
}
.tabs.second {
  height: 38px;
  border-top: 3px solid #383838;
}
.row {
  display: flex;
  align-items: center;
  gap: 6px;
  height: 36px;
  padding: 0 14px 0 4px;
  border-bottom: 1px solid #404040;
  white-space: nowrap;
}
.row.filter {
  height: 41px;
  padding-top: 8px;
}
.row .drop {
  height: 26px;
}
.row label,
.row span {
  padding-bottom: 3px;
}
.w-kind {
  width: 106px;
}
.w-kind select {
  padding-left: 27px;
}
.lens {
  position: absolute;
  left: 10px;
  top: 7px;
  width: 14px;
  height: 14px;
}
.kinds {
  flex: 1;
  display: flex;
  justify-content: space-between;
  padding: 0 15px;
}
.kinds svg,
.locks svg {
  width: 16px;
  height: 16px;
}
.switch {
  position: relative;
  width: 10px;
  height: 22px;
  border-radius: 5px;
  background: #3a3a3a;
}
.switch::before {
  content: "";
  position: absolute;
  left: 0;
  top: 0;
  width: 10px;
  height: 10px;
  border-radius: 5px;
  background: #dcdcdc;
}
.w-blend {
  flex: 1;
}
.w-pct {
  width: 67px;
  font-size: 14px;
}
.lock-row {
  padding-left: 7px;
  height: 39px;
  border: 0;
}
.locks {
  flex: 1;
  display: flex;
  justify-content: space-between;
  padding: 0 4px 0 8px;
}
.layers {
  flex: 1;
  background: #4c4c4c;
  border-bottom: 1px solid #383838;
}
.layer {
  display: flex;
  height: 51px;
  margin-right: 20px;
  background: #535353;
  border-bottom: 1px solid #424242;
}
.eye {
  width: 38px;
  display: flex;
  align-items: center;
  justify-content: center;
  border-right: 1px solid #424242;
}
.eye svg {
  width: 16px;
  height: 16px;
}
.layer-main {
  flex: 1;
  display: flex;
  align-items: center;
  gap: 10px;
  padding: 0 17px 0 2px;
}
.layer.selected .layer-main {
  background: #6a6a6a;
}
.thumb {
  width: 42px;
  height: 44px;
}
.padlock {
  width: 15px;
  height: 16px;
  margin-left: auto;
}
.layers-foot {
  height: 30px;
  display: flex;
  align-items: center;
  justify-content: flex-end;
  gap: 17px;
  padding-right: 34px;
}
.layers-foot svg {
  width: 17px;
  height: 17px;
}
.dim {
  color: #8c8c8c;
}
.behind {
  width: 12px;
  display: flex;
  flex-direction: column;
  background: #fff;
}
.blue {
  height: 35px;
  background: #3296fa;
}
.white {
  height: 83px;
  border-bottom: 1px solid #bbb;
}
.track {
  flex: 1;
  display: flex;
  flex-direction: column;
  justify-content: space-between;
  padding: 6px 0;
  background: #f0f0f0;
}
.track svg {
  width: 12px;
  height: 8px;
}
.track i {
  width: 10px;
  height: 208px;
  margin-top: 350px;
  background: #c1c1c1;
}
.white-end {
  height: 28px;
}
.taskbar {
  height: 50px;
  display: flex;
  background: #eee;
  color: #000;
}
.taskbar button {
  display: flex;
  align-items: center;
  justify-content: center;
}
.start {
  width: 60px;
}
.start svg {
  width: 20px;
  height: 20px;
}
.search {
  width: 430px;
  display: flex;
  align-items: center;
  padding-left: 14px;
  background: #fff;
  border: 1px solid #ccc;
}
.search svg {
  width: 22px;
  height: 22px;
  fill: none;
  stroke: #222;
  stroke-width: 1.5;
}
.search input {
  flex: 1;
  margin-left: 13px;
  font-size: 19px;
}
.search input::placeholder {
  color: #222;
  opacity: 1;
}
.sys {
  width: 60px;
}
.sys svg {
  width: 22px;
  height: 22px;
  fill: none;
  stroke: #000;
  stroke-width: 1.5;
}
.sys + .app {
  margin-left: 3px;
}
.app {
  position: relative;
  width: 62px;
  padding-bottom: 2px;
}
.app svg {
  width: 32px;
  height: 32px;
}
.app::after {
  content: "";
  position: absolute;
  left: 6px;
  right: 6px;
  bottom: 0;
  height: 3px;
  background: #2b88cc;
}
.app.active {
  background: #f9f9f9;
}
.app.active::after {
  left: 0;
  right: 0;
}
.tray {
  display: flex;
  align-items: center;
  margin: 0 5px 0 auto;
  border-right: 1px solid #bbb;
}
.tray button {
  width: 30px;
  height: 50px;
}
.tray svg {
  width: 22px;
  height: 22px;
}
.tray .sogou {
  width: 38px;
}
.clock {
  width: 100px;
  display: flex;
  flex-direction: column;
  align-items: center;
  gap: 3px;
  font-size: 16px;
}
.tray .notice {
  width: 58px;
}
.notice svg {
  width: 36px;
  height: 36px;
  margin-top: 10px;
}
.notice text {
  font-size: 16px;
}
.speed {
  position: absolute;
  z-index: 6;
  right: 447px;
  bottom: 57px;
  width: 84px;
  height: 84px;
  text-align: center;
  color: #3c3c3c;
}
.speed svg {
  position: absolute;
  left: 0;
  top: 0;
  width: 84px;
  height: 84px;
}
.speed p {
  position: relative;
  margin: 16px 0 0;
  font-weight: 300;
  font-size: 29px;
  line-height: 28px;
}
.speed small {
  font-size: 15px;
}
.speed .rate {
  margin: 0 0 0 10px;
  font-weight: 400;
  font-size: 12px;
  line-height: 14px;
}
.ink {
  position: absolute;
  z-index: 7;
  left: 0;
  top: 0;
  width: 100%;
  height: 100%;
  pointer-events: none;
  fill: none;
  stroke: #ed1c24;
  stroke-width: 9;
  stroke-linecap: square;
  stroke-linejoin: round;
}
.mark {
  position: absolute;
  z-index: 8;
  right: 13px;
  bottom: 8px;
  font-family: "Noto Sans", sans-serif;
  font-size: 20px;
  line-height: 26px;
  color: #d8d8d8cc;
  text-shadow: 1px 1px 1px #777;
}
</style>
